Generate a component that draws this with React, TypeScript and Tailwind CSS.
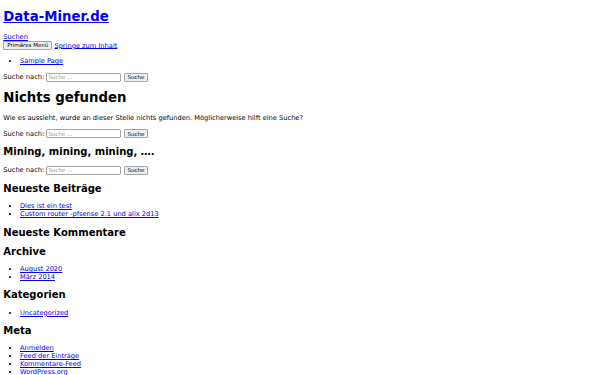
const link = "text-[#0000ee] underline";

function SearchForm() {
  return (
    <form role="search" className="m-0">
      <label>
        <span>Suche nach: </span>
        <input
          type="search"
          placeholder="Suche …"
          className="w-[75px] h-[9px] border border-[#a5a5a5] rounded-[1px] bg-white px-[1px] py-0 text-[5.5px] leading-[normal] align-baseline placeholder:text-[#9a9a9a] outline-none"
        />
      </label>{" "}
      <input
        type="submit"
        value="Suche"
        className="h-[9px] border border-[#a5a5a5] rounded-[1px] bg-[#efefef] px-[3px] py-0 text-[5.5px] leading-[normal] text-black align-baseline"
      />
    </form>
  );
}

function Widget({ title, items }: { title: string; items?: string[] }) {
  return (
    <section>
      <h2 className="text-[10px] font-bold leading-[normal] my-[8.3px]">{title}</h2>
      {items && (
        <ul className="list-disc pl-[16.7px] my-[7.2px]">
          {items.map((i) => (
            <li key={i} className="leading-[8px]">
              <a href="#" className={link}>
                {i}
              </a>
            </li>
          ))}
        </ul>
      )}
    </section>
  );
}

export default function App() {
  return (
    <div className="bg-white min-h-[375px] overflow-hidden">
      <div className="mx-[3.3px] font-['DejaVu_Sans',sans-serif] text-[6.67px] leading-[normal] text-black">
        {/* header */}
        <header>
          <h1 className="text-[13.3px] font-bold leading-[normal] my-[8.9px]">
            <a href="#" className={link}>
              Data-Miner.de
            </a>
          </h1>
          <a href="#" className={link}>
            Suchen
          </a>
          <nav>
            <button className="h-[9px] border border-[#a5a5a5] rounded-[1px] bg-[#efefef] px-[3px] py-0 text-[5.5px] leading-[normal] align-baseline">
              Primäres Menü
            </button>{" "}
            <a href="#" className={link}>
              Springe zum Inhalt
            </a>
            <ul className="list-disc pl-[16.7px] my-[7.4px]">
              <li className="leading-[8px]">
                <a href="#" className={link}>
                  Sample Page
                </a>
              </li>
            </ul>
          </nav>
          <SearchForm />
        </header>

        {/* content */}
        <main>
          <h1 className="text-[13.3px] font-bold leading-[normal] my-[8.9px]">Nichts gefunden</h1>
          <p className="my-[6.7px]">
            Wie es aussieht, wurde an dieser Stelle nichts gefunden. Möglicherweise hilft eine Suche?
          </p>
          <SearchForm />
        </main>

        {/* sidebar */}
        <aside>
          <section>
            <h2 className="text-[10px] font-bold leading-[normal] my-[8.3px]">Mining, mining, mining, ….</h2>
            <SearchForm />
          </section>
          <Widget title="Neueste Beiträge" items={["Dies ist ein test", "Custom router -pfsense 2.1 und alix 2d13"]} />
          <Widget title="Neueste Kommentare" />
          <Widget title="Archive" items={["August 2020", "März 2014"]} />
          <Widget title="Kategorien" items={["Uncategorized"]} />
          <Widget title="Meta" items={["Anmelden", "Feed der Einträge", "Kommentare-Feed", "WordPress.org"]} />
        </aside>
      </div>
    </div>
  );
}
